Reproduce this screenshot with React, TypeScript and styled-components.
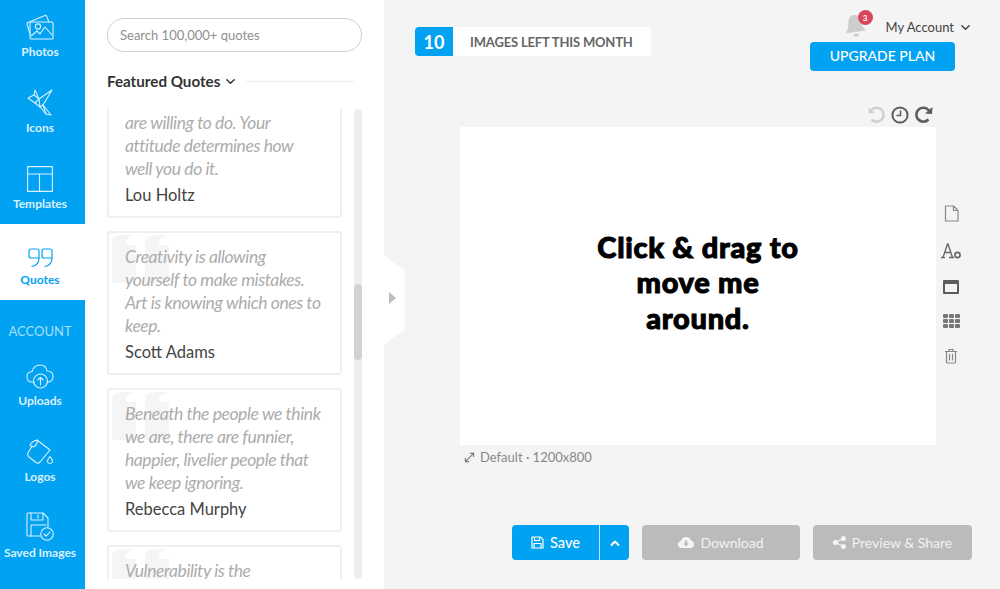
import React from "react";
import styled, { createGlobalStyle } from "styled-components";

const Global = createGlobalStyle`
  html, body { margin: 0; padding: 0; height: 100%; background: #f4f4f4; }
  body { font-family: Lato, "Liberation Sans", sans-serif; overflow: hidden; }
  #root { height: 589px; }
  * { box-sizing: border-box; }
`;

const BLUE = "#02a2f2";

const Page = styled.div`
  position: relative;
  display: flex;
  width: 1000px;
  height: 589px;
  overflow: hidden;
`;

const Sidebar = styled.nav`
  flex: 0 0 85px;
  background: ${BLUE};
  display: flex;
  flex-direction: column;
  overflow: hidden;
`;

const NavList = styled.div`
  margin-top: -4px;
  display: flex;
  flex-direction: column;
`;

const NavItem = styled.div<{ $active?: boolean }>`
  flex: 0 0 76px;
  display: flex;
  flex-direction: column;
  align-items: center;
  justify-content: flex-end;
  padding: 0 5px 13px 0;
  gap: 4px;
  background: ${(p) => (p.$active ? "#fff" : "transparent")};
  color: ${(p) => (p.$active ? BLUE : "#d9f1fe")};
  font-size: 12px;
  font-weight: 700;
  line-height: 15px;
  white-space: nowrap;
  svg { display: block; }
`;

const NavHeading = styled.div`
  flex: 0 0 45px;
  display: flex;
  align-items: flex-start;
  justify-content: center;
  padding: 23px 5px 0 0;
  line-height: 16px;
  color: #a5defb;
  font-size: 13px;
`;

const Panel = styled.section`
  flex: 0 0 299px;
  background: #fff;
  display: flex;
  flex-direction: column;
  padding: 18px 22px 10px 22px;
`;

const Search = styled.div`
  width: 255px;
  height: 34px;
  border: 1px solid #cfcfcf;
  border-radius: 17px;
  padding-left: 12px;
  display: flex;
  align-items: center;
  font-size: 13px;
  color: #8f8f8f;
`;

const FeaturedRow = styled.div`
  display: flex;
  align-items: center;
  height: 24px;
  margin-top: 17px;
  width: 247px;
  font-size: 15.2px;
  font-weight: 700;
  color: #333;
  gap: 5px;
  white-space: nowrap;
`;

const Rule = styled.div`
  flex: 1;
  height: 1px;
  background: #ececec;
  margin-left: 5px;
`;

const ListArea = styled.div`
  position: relative;
  margin-top: 16px;
  height: 470px;
  overflow: hidden;
`;

const List = styled.div`
  display: flex;
  flex-direction: column;
  gap: 13px;
  margin-top: -81px;
  width: 235px;
`;

const Card = styled.article<{ $h: number }>`
  position: relative;
  flex: 0 0 ${(p) => p.$h}px;
  background: #fff;
  border: 2px solid #efefef;
  border-radius: 3px;
  padding: 12px 0 0 16px;
  overflow: hidden;
`;

const QuoteMark = styled.svg`
  position: absolute;
  left: 3px;
  top: 0;
`;

const QuoteText = styled.p`
  position: relative;
  margin: 0;
  font-size: 17.5px;
  line-height: 23px;
  font-style: italic;
  color: #acacac;
  letter-spacing: -0.42px;
  white-space: nowrap;
`;

const Author = styled.div`
  position: relative;
  margin-top: 4px;
  font-size: 16.5px;
  line-height: 22px;
  color: #444;
`;

const Track = styled.div`
  position: absolute;
  right: 0;
  top: 0;
  width: 8px;
  height: 100%;
  background: #eee;
  border-radius: 4px;
`;

const Thumb = styled.div`
  position: absolute;
  right: 0;
  top: 175px;
  width: 8px;
  height: 76px;
  background: #d2d2d2;
  border-radius: 4px;
`;

const CollapseTab = styled.div`
  position: absolute;
  left: 384px;
  top: 255px;
  width: 21px;
  height: 90px;
  padding-right: 4px;
  background: #fff;
  clip-path: polygon(0 0, 100% 16px, 100% 74px, 0 100%);
  display: flex;
  align-items: center;
  justify-content: center;
`;

const Arrow = styled.div`
  width: 0;
  height: 0;
  margin-top: -4px;
  border-left: 7px solid #bdbdbd;
  border-top: 6px solid transparent;
  border-bottom: 6px solid transparent;
`;

const Main = styled.main`
  flex: 1;
  min-width: 0;
  background: #f4f4f4;
  display: flex;
  flex-direction: column;
`;

const TopBar = styled.header`
  height: 105px;
  display: flex;
  justify-content: space-between;
  align-items: flex-start;
  padding: 0 45px 0 31px;
`;

const Quota = styled.div`
  margin-top: 27px;
  width: 236px;
  height: 29px;
  display: flex;
  background: #fff;
  border-radius: 4px;
  overflow: hidden;
`;

const QuotaNum = styled.div`
  flex: 0 0 38px;
  background: ${BLUE};
  color: #fff;
  font-size: 18px;
  font-weight: 700;
  display: flex;
  align-items: center;
  justify-content: center;
`;

const QuotaText = styled.div`
  flex: 1;
  display: flex;
  align-items: center;
  padding-left: 17px;
  font-size: 13px;
  font-weight: 700;
  color: #666;
  letter-spacing: -0.17px;
  white-space: nowrap;
`;

const AccountCol = styled.div`
  display: flex;
  flex-direction: column;
  align-items: flex-end;
`;

const AccountRow = styled.div`
  height: 42px;
  padding-top: 12px;
  display: flex;
  align-items: center;
  gap: 6px;
  font-size: 13px;
  color: #444;
  margin-right: -16px;
  white-space: nowrap;
`;

const Bell = styled.div`
  position: relative;
  width: 22px;
  height: 24px;
  margin-right: 14px;
  margin-top: -2px;
  svg { display: block; transform: rotate(-8deg); }
`;

const Badge = styled.span`
  position: absolute;
  right: -7px;
  top: -4px;
  width: 15px;
  height: 15px;
  border-radius: 50%;
  background: #d8475c;
  color: #fff;
  font-size: 8px;
  font-weight: 700;
  display: flex;
  align-items: center;
  justify-content: center;
`;

const Upgrade = styled.button`
  width: 145px;
  height: 29px;
  border: 0;
  border-radius: 4px;
  background: ${BLUE};
  color: #fff;
  font: 500 14px Lato, sans-serif;
  padding: 0 0 2px;
`;

const Stage = styled.div`
  display: flex;
  padding-left: 76px;
`;

const CanvasCol = styled.div`
  width: 476px;
  display: flex;
  flex-direction: column;
`;

const History = styled.div`
  height: 22px;
  display: flex;
  justify-content: flex-end;
  align-items: flex-start;
  padding-right: 2px;
  gap: 4px;
`;

const Canvas = styled.div`
  height: 318px;
  background: #fff;
  display: flex;
  align-items: center;
  justify-content: center;
  padding: 0 0 8px 0;
`;

const CanvasText = styled.div`
  width: 215px;
  text-align: center;
  font-size: 29px;
  line-height: 35.5px;
  font-weight: 900;
  color: #000;
  -webkit-text-stroke: 1px #000;
  letter-spacing: 0.7px;
`;

const Caption = styled.div`
  margin-top: 3px;
  height: 18px;
  display: flex;
  align-items: center;
  gap: 5px;
  padding-left: 4px;
  font-size: 13px;
  color: #888;
`;

const Tools = styled.div`
  display: flex;
  flex-direction: column;
  align-items: center;
  width: 30px;
  padding-top: 100px;
  gap: 20px;
  svg { display: block; }
`;

const Actions = styled.div`
  margin-top: 59px;
  padding-right: 28px;
  display: flex;
  justify-content: flex-end;
  gap: 13px;
`;

const SaveGroup = styled.div`
  display: flex;
  height: 35px;
  border-radius: 4px;
  overflow: hidden;
  background: ${BLUE};
`;

const SaveBtn = styled.div`
  width: 87px;
  display: flex;
  align-items: center;
  justify-content: center;
  gap: 6px;
  color: #fff;
  font-size: 14.5px;
  font-weight: 500;
`;

const SaveMore = styled.div`
  width: 30px;
  border-left: 1px solid #bfe7fc;
  display: flex;
  align-items: center;
  justify-content: center;
`;

const GreyBtn = styled.div<{ $w: number }>`
  width: ${(p) => p.$w}px;
  height: 35px;
  border-radius: 4px;
  background: #bbb;
  color: #f2f2f2;
  display: flex;
  align-items: center;
  justify-content: center;
  gap: 6px;
  font-size: 14px;
  white-space: nowrap;
`;

const ic = { fill: "none", stroke: "currentColor", strokeWidth: 1.1, strokeLinejoin: "round" as const, strokeLinecap: "round" as const };

const PhotosIcon = () => (
  <svg width="28" height="26" viewBox="0 0 28 26" {...ic}>
    <path d="M4 20 L1 10 Q1 9 2 8.5 L19 1.5 Q20 1 20.5 2 L23 8" />
    <path d="M5 8 H26 Q27 8 27 9 V24 Q27 25 26 25 H5 Q4 25 4 24 V9 Q4 8 5 8 Z" />
    <circle cx="12" cy="12.5" r="2.6" />
    <path d="M5 22 L11 17 L14 20 L19 13 L26 21" />
  </svg>
);
const BirdIcon = () => (
  <svg width="26" height="27" viewBox="0 0 26 27" {...ic}>
    <path d="M1 9 L7 6 L12 10 L8 14 Z" />
    <path d="M7 6 L8 1 L12 10" />
    <path d="M12 10 L25 1 L16 16 L24 26 L19 25 L13 18 Z" />
    <path d="M8 14 L13 18 L16 16 M19 25 L16 16" />
  </svg>
);
const TemplateIcon = () => (
  <svg width="26" height="26" viewBox="0 0 26 26" {...ic}>
    <rect x="0.6" y="0.6" width="24.8" height="24.8" />
    <path d="M0.6 8 H25.4 M12.5 8 V25.4" />
  </svg>
);
const QuotesIcon = () => (
  <svg width="25" height="20" viewBox="0 0 25 20" fill="none" stroke="currentColor" strokeWidth="1.2" strokeLinecap="round">
    <path d="M3 1 H9 Q11 1 11 3 V10 Q11 17 4 18.5 M11 10 H3 Q1 10 1 8 V3 Q1 1 3 1" />
    <path d="M16 1 H22 Q24 1 24 3 V10 Q24 17 17 18.5 M24 10 H16 Q14 10 14 8 V3 Q14 1 16 1" />
  </svg>
);
const UploadIcon = () => (
  <svg width="28" height="25" viewBox="0 0 28 25" {...ic}>
    <path d="M8 18 H6 Q1 18 1 12.5 Q1 8 6 7.5 Q8 1 14 1 Q20 1 21 7 Q27 7 27 12.5 Q27 18 21 18" />
    <circle cx="14.5" cy="17" r="7" />
    <path d="M14.5 21 V13.5 M11.8 16 L14.5 13.5 L17.2 16" />
  </svg>
);
const LogosIcon = () => (
  <svg width="26" height="26" viewBox="0 0 26 26" {...ic}>
    <path d="M10 1 L23 11 L13 23 Q11 25 9 23.5 L2 18 Q0 16 1 14 L5 7" />
    <path d="M3 6 Q5 2 10 1 Q11 4 8 7 Q5 9 3 6 Z" />
    <path d="M23 17.5 Q26 21 25.5 23 Q23 26 20.5 23 Q20 21 23 17.5 Z" />
  </svg>
);
const SavedIcon = () => (
  <svg width="28" height="29" viewBox="0 0 28 29" {...ic}>
    <path d="M14 24 H2 Q1 24 1 23 V2 Q1 1 2 1 H17 L22 6 V15" />
    <path d="M5 1 V8 H17 V1 M12 3 V6" />
    <path d="M5 24 V13 H20" />
    <circle cx="21" cy="22" r="6.3" />
    <path d="M18 22 L20.2 24.2 L24 20" />
  </svg>
);

const QuoteBg = () => (
  <QuoteMark width="62" height="56" viewBox="0 0 62 56" fill="#f5f5f5">
    <path d="M0 10 Q0 2 10 2 H22 Q12 6 14 12 H24 V50 H0 Z" />
    <path d="M33 10 Q33 2 43 2 H55 Q45 6 47 12 H57 V50 H33 Z" />
  </QuoteMark>
);

const Chevron = ({ c = "#333", s = 11 }: { c?: string; s?: number }) => (
  <svg width={s} height={s} viewBox="0 0 12 12" fill="none" stroke={c} strokeWidth="1.6" strokeLinecap="round" strokeLinejoin="round">
    <path d="M2 4 L6 8 L10 4" />
  </svg>
);

const UndoIcon = () => (
  <svg width="20" height="20" viewBox="0 0 20 20" fill="none" stroke="#cfcfcf" strokeWidth="2.4">
    <path d="M5.5 14.5 A7 7 0 1 0 5 5.5" />
    <path d="M2.5 2.5 L3 8.5 L8.5 7.8" fill="#cfcfcf" stroke="none" />
  </svg>
);
const ClockIcon = () => (
  <svg width="20" height="20" viewBox="0 0 20 20" fill="none" stroke="#5c5c5c" strokeWidth="2">
    <circle cx="10" cy="10" r="7.6" />
    <path d="M10.5 5.5 V10.5 H6.5" strokeWidth="1.5" />
  </svg>
);
const RedoIcon = () => (
  <svg width="20" height="20" viewBox="0 0 20 20" fill="none" stroke="#5c5c5c" strokeWidth="2.6">
    <path d="M14.5 14.5 A7 7 0 1 1 15 5.5" />
    <path d="M18.5 2 L18 9 L11 8.5" fill="#5c5c5c" stroke="none" />
  </svg>
);

const quotes = [
  {
    h: 190,
    lines: ["Your talent determines what", "you can do. Your motivation", "determines how much you", "are willing to do. Your", "attitude determines how", "well you do it."],
    author: "Lou Holtz",
  },
  {
    h: 144,
    lines: ["Creativity is allowing", "yourself to make mistakes.", "Art is knowing which ones to", "keep."],
    author: "Scott Adams",
  },
  {
    h: 144,
    lines: ["Beneath the people we think", "we are, there are funnier,", "happier, livelier people that", "we keep ignoring."],
    author: "Rebecca Murphy",
  },
  { h: 144, lines: ["Vulnerability is the"], author: "" },
];

export default function App() {
  return (
    <Page>
      <Global />
      <Sidebar>
        <NavList>
          <NavItem><PhotosIcon />Photos</NavItem>
          <NavItem><BirdIcon />Icons</NavItem>
          <NavItem><TemplateIcon />Templates</NavItem>
          <NavItem $active><QuotesIcon />Quotes</NavItem>
          <NavHeading>ACCOUNT</NavHeading>
          <NavItem><UploadIcon />Uploads</NavItem>
          <NavItem><LogosIcon />Logos</NavItem>
          <NavItem><SavedIcon />Saved Images</NavItem>
        </NavList>
      </Sidebar>

      <Panel>
        <Search>Search 100,000+ quotes</Search>
        <FeaturedRow>Featured Quotes <Chevron /><Rule /></FeaturedRow>
        <ListArea>
          <List>
            {quotes.map((q) => (
              <Card key={q.lines[0]} $h={q.h}>
                <QuoteBg />
                <QuoteText>
                  {q.lines.map((l) => (
                    <React.Fragment key={l}>{l}<br /></React.Fragment>
                  ))}
                </QuoteText>
                {q.author && <Author>{q.author}</Author>}
              </Card>
            ))}
          </List>
          <Track />
          <Thumb />
        </ListArea>
      </Panel>

      <CollapseTab><Arrow /></CollapseTab>

      <Main>
        <TopBar>
          <Quota>
            <QuotaNum>10</QuotaNum>
            <QuotaText>IMAGES LEFT THIS MONTH</QuotaText>
          </Quota>
          <AccountCol>
            <AccountRow>
              <Bell>
                <svg width="22" height="24" viewBox="0 0 22 24" fill="#cdcdcd">
                  <path d="M11 1 C6 1 5 6 4.5 10 C4 14 2 16 1 18 L21 18 C20 16 18 14 17.5 10 C17 6 16 1 11 1 Z" />
                  <path d="M8 20 H14 Q13 23 11 23 Q9 23 8 20 Z" />
                </svg>
                <Badge>3</Badge>
              </Bell>
              My Account
              <Chevron c="#444" />
            </AccountRow>
            <Upgrade>UPGRADE PLAN</Upgrade>
          </AccountCol>
        </TopBar>

        <Stage>
          <CanvasCol>
            <History>
              <UndoIcon />
              <ClockIcon />
              <RedoIcon />
            </History>
            <Canvas>
              <CanvasText>Click &amp; drag to move me around.</CanvasText>
            </Canvas>
            <Caption>
              <svg width="11" height="11" viewBox="0 0 12 12" fill="none" stroke="#777" strokeWidth="1.2">
                <path d="M2 10 L10 2 M6.5 1.5 H10.5 V5.5 M1.5 6.5 V10.5 H5.5" />
              </svg>
              Default · 1200x800
            </Caption>
          </CanvasCol>
          <Tools>
            <svg width="15" height="17" viewBox="0 0 15 17" fill="none" stroke="#888" strokeWidth="1.2" strokeLinejoin="round">
              <path d="M1.5 1 H9.5 L14 5.5 V16 H1.5 Z M9.5 1 V5.5 H14" />
            </svg>
            <svg width="22" height="18" viewBox="0 0 22 18" fill="none">
              <path d="M1 15.5 H5 M9 15.5 H14 M3 15.5 L7.5 2 H8 L12.5 15.5 M4.5 10.5 H11" stroke="#666" strokeWidth="1.3" />
              <circle cx="17.5" cy="13" r="2.6" stroke="#666" strokeWidth="1.6" />
            </svg>
            <svg width="16" height="14" viewBox="0 0 16 14">
              <path d="M0 1 Q0 0 1 0 H15 Q16 0 16 1 V13 Q16 14 15 14 H1 Q0 14 0 13 Z M2 4 V12 H14 V4 Z" fill="#5c5c5c" fillRule="evenodd" />
            </svg>
            <svg width="17" height="14" viewBox="0 0 17 14" fill="#777">
              <rect x="0" y="0" width="5" height="4" rx="1" />
              <rect x="6" y="0" width="5" height="4" rx="1" />
              <rect x="12" y="0" width="5" height="4" rx="1" />
              <rect x="0" y="5" width="5" height="4" rx="1" />
              <rect x="6" y="5" width="5" height="4" rx="1" />
              <rect x="12" y="5" width="5" height="4" rx="1" />
              <rect x="0" y="10" width="5" height="4" rx="1" />
              <rect x="6" y="10" width="5" height="4" rx="1" />
              <rect x="12" y="10" width="5" height="4" rx="1" />
            </svg>
            <svg width="14" height="16" viewBox="0 0 14 16" fill="none" stroke="#888" strokeWidth="1.2">
              <path d="M1 3.5 H13 M5 3.5 V1.5 H9 V3.5 M2.5 3.5 V14 Q2.5 15 3.5 15 H10.5 Q11.5 15 11.5 14 V3.5 M5.5 6 V12.5 M8.5 6 V12.5" />
            </svg>
          </Tools>
        </Stage>

        <Actions>
          <SaveGroup>
            <SaveBtn>
              <svg width="13" height="13" viewBox="0 0 13 13" fill="none" stroke="#fff" strokeWidth="1.2">
                <path d="M1 1 H9.5 L12 3.5 V12 H1 Z M3.5 1 V4.5 H8.5 V1 M3 12 V7.5 H10 V12" />
              </svg>
              Save
            </SaveBtn>
            <SaveMore>
              <svg width="12" height="12" viewBox="0 0 12 12" fill="none" stroke="#fff" strokeWidth="2" strokeLinecap="round" strokeLinejoin="round">
                <path d="M2.5 8 L6 4.5 L9.5 8" />
              </svg>
            </SaveMore>
          </SaveGroup>
          <GreyBtn $w={158}>
            <svg width="16" height="13" viewBox="0 0 16 13" fill="#f5f5f5">
              <path d="M4 12 Q0 12 0 8.5 Q0 5.5 3 5 Q4 1 8 1 Q12 1 13 4.5 Q16 5 16 8.5 Q16 12 12 12 Z" />
              <path d="M6.8 4.5 H9.2 V7.5 H11 L8 10.5 L5 7.5 H6.8 Z" fill="#bbb" />
            </svg>
            Download
          </GreyBtn>
          <GreyBtn $w={159}>
            <svg width="13" height="13" viewBox="0 0 13 13" fill="#f5f5f5">
              <circle cx="2.5" cy="6.5" r="2.5" />
              <circle cx="10.5" cy="2.5" r="2.5" />
              <circle cx="10.5" cy="10.5" r="2.5" />
              <path d="M2.5 6.5 L10.5 2.5 M2.5 6.5 L10.5 10.5" stroke="#f5f5f5" strokeWidth="1.3" />
            </svg>
            Preview &amp; Share
          </GreyBtn>
        </Actions>
      </Main>
    </Page>
  );
}
